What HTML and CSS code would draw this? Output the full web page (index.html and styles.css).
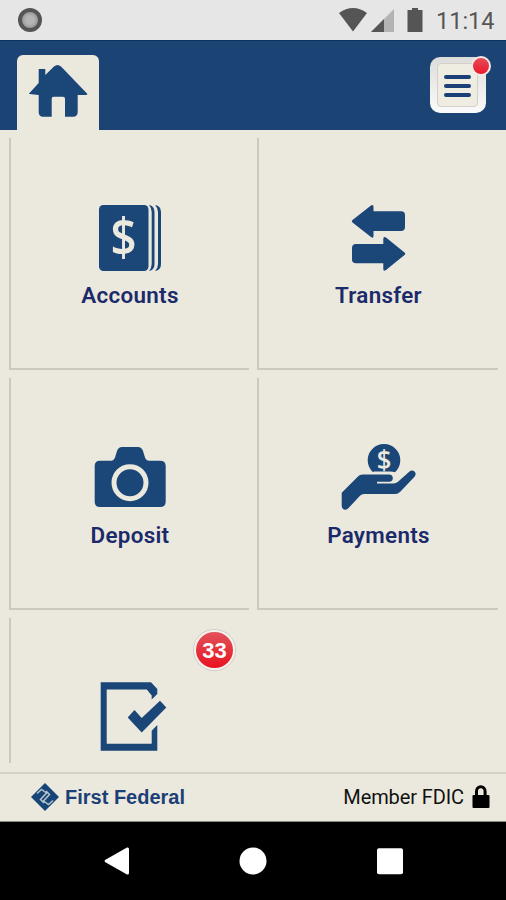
FILE: index.html
```
<!DOCTYPE html>
<html lang="en">
<head>
  <meta charset="UTF-8" />
  <meta name="viewport" content="width=device-width, initial-scale=1.0"/>
  <title>First Federal</title>
  <link rel="stylesheet" href="styles.css">
</head>
<body>
  <div class="status-bar">
    <span class="record"></span>
    <svg class="status-icons" viewBox="0 0 86 26">
      <path d="M0 6 Q14 -4 28 6 L14 24.500 Z" fill="#555" />
      <path d="M55 2 V25 H32 Z" fill="#b3b3b3" />
      <path d="M45 12 V25 H32 Z" fill="#555" />
      <path d="M73 1 h6 v2 h4.500 v22 h-15 v-22 h4.500 Z" fill="#555" />
    </svg>
    <span class="time">11:14</span>
  </div>

  <header class="header">
    <a class="home-tab" href="#">
      <svg class="home-icon" viewBox="0 0 60 54">
        <path d="M1.500 30 Q0.500 30 1.500 29 L10.700 19 V5 H17.300 V11 L26 2.500 Q29.500 -0.500 33 2.500 L59 29.500 Q60 31 58 31 H49.700 V48 Q49.700 52.700 45 52.700 H37 V34.500 Q37 32.700 35 32.700 H25.500 Q23.700 32.700 23.700 34.500 V52.700 H15 Q10.700 52.700 10.700 48 V31 Z" />
      </svg>
    </a>
    <button class="menu">
      <span class="menu-inner"><i></i><i></i><i></i></span>
      <span class="dot"></span>
    </button>
  </header>

  <main class="tiles">
    <a class="tile" href="#">
      <svg class="tile-icon" viewBox="0 0 80 80">
        <rect x="9" y="7" width="49.500" height="66" rx="4.500" />
        <path d="M59 7 Q64.500 8 64.500 14 V66 Q64.500 72 59 73 Q61.700 70 61.700 66 V14 Q61.700 10 59 7 Z" />
        <path d="M65 7 Q71 8 71 14 V66 Q71 72 65 73 Q68 70 68 66 V14 Q68 10 65 7 Z" />
        <text class="dollar" transform="translate(33.500 58) scale(0.88 1)">$</text>
      </svg>
      <span class="label">Accounts</span>
    </a>
    <a class="tile" href="#">
      <svg class="tile-icon" viewBox="1 0 80 80">
        <path d="M14.500 22 L33 7.500 Q35.500 6 35.500 9 V13.300 H63 Q67 13.300 67 17 V29 Q67 33 63 33 H35.500 V38 Q35.500 41 33 39 L14.500 24.500 Q13 23.200 14.500 22 Z" />
        <path d="M66.500 54.500 L48 39.500 Q45.300 38 45.300 41 V46 H18 Q14 46 14 50 V61.500 Q14 65.300 18 65.300 H45.300 V71 Q45.300 74 48 72 L66.500 57 Q68 55.700 66.500 54.500 Z" />
      </svg>
      <span class="label">Transfer</span>
    </a>
    <a class="tile" href="#">
      <svg class="tile-icon" viewBox="0 0 80 80">
        <path d="M10 22.700 H21 Q24 22.500 25 19.500 L27 13 Q28.500 9 32 9 H48 Q51.500 9 53 13 L55 19.500 Q56 22.500 59 22.700 H70 Q75.700 22.700 75.700 28 V63.500 Q75.700 69 70 69 H10 Q4.700 69 4.700 63.500 V28 Q4.700 22.700 10 22.700 Z" />
        <circle class="lens" cx="40" cy="44.700" r="16" />
      </svg>
      <span class="label">Deposit</span>
    </a>
    <a class="tile" href="#">
      <svg class="tile-icon" viewBox="1 0 80 80">
        <path d="M35 34.300 A16.300 16.300 0 1 1 57 34.300 Q55 33.600 52 33.600 H36 Z" />
        <text class="dollar small" transform="translate(46 32) scale(0.95 1)">$</text>
        <path d="M3.700 54.700 L19.500 39 Q21.500 36.600 25 36.600 H51 Q54.800 36.600 54.800 40.300 Q54.800 43.700 51 43.700 H39 V45.600 H55.500 Q58 45.600 60 43.800 L71.500 33.500 Q74 31.500 76.500 33.600 Q78.800 36 76.500 38.800 L62.500 53.500 Q60 56 57 56 H26 Q23.500 56 22 57.800 L10.500 70 Q8.500 72.500 6 71.500 Q3.700 71 3.700 68 Z" />
      </svg>
      <span class="label">Payments</span>
    </a>
    <a class="tile last" href="#">
      <svg class="tile-icon" viewBox="0 0 80 80">
        <path d="M10.700 5.300 H61 L67.300 12 V17 L61.700 22.500 V18.500 L56.800 12.500 H16.700 V66.700 H61.700 V53.700 L67.300 48 V73.700 H10.700 Z" />
        <path d="M37.700 40.500 L44.500 33 L51.700 40.900 L70 23.800 L76.300 30.600 L51.700 55.500 Z" />
      </svg>
      <span class="badge">33</span>
    </a>
  </main>

  <footer class="footer">
    <svg class="logo" viewBox="0 0 30 30">
      <path d="M15 1 L29 15 L15 29 L1 15 Z" fill="#164577" />
      <path d="M7 11.500 L11.500 7.500 L16.500 11 L10.500 17.500 L14 21 M23 18.500 L18.500 22.500 L13.500 19 L19.500 12.500 L16 9" fill="none" stroke="#b9c3ca" stroke-width="1.500" />
    </svg>
    <span class="brand">First Federal</span>
    <span class="fdic">Member FDIC</span>
    <svg class="lock" viewBox="0 0 18 24">
      <path d="M4.500 11 V6.500 A4.300 4.800 0 0 1 13.100 6.500 V11" fill="none" stroke="#000" stroke-width="3" />
      <rect x="0.500" y="10" width="17" height="13" rx="1" />
    </svg>
  </footer>

  <nav class="nav-bar">
    <svg viewBox="-1 0 28 28"><path d="M2 13 L24 0.500 Q26 0 26 2 V26 Q26 28 24 27.500 L2 15 Q1 14 2 13 Z" /></svg>
    <svg viewBox="0 0 28 28"><circle cx="14" cy="14" r="13.500" /></svg>
    <svg viewBox="0 0 28 28"><rect x="1" y="1.300" width="26" height="26" rx="2" /></svg>
  </nav>
</body>
</html>
```
FILE: styles.css
```
* {
  box-sizing: border-box;
}

body {
  margin: 0;
  width: 506px;
  height: 900px;
  display: flex;
  flex-direction: column;
  overflow: hidden;
  background-color: #ebe8dd;
  font-family: Roboto, "Liberation Sans", sans-serif;
}

a {
  text-decoration: none;
}

svg {
  display: block;
  flex: none;
}

.status-bar {
  height: 40px;
  flex: none;
  display: flex;
  align-items: center;
  padding: 0 12px 0 18px;
  background-color: #e6e6e6;
}

.record {
  width: 24px;
  height: 24px;
  border: 4px solid #555;
  border-radius: 50%;
  background: radial-gradient(#b5b5b5 35%, #999 70%);
}

.status-icons {
  width: 86px;
  height: 26px;
  margin-left: auto;
}

.time {
  width: 58px;
  margin-left: 11px;
  padding-top: 2px;
  font-size: 23.5px;
  line-height: 28px;
  color: #555;
}

.header {
  height: 90px;
  flex: none;
  display: flex;
  justify-content: space-between;
  align-items: flex-start;
  padding: 14px 20px 0 17px;
  background-color: #1b4475;
  border-top: 1px solid #0b3260;
}

.home-tab {
  width: 82px;
  height: 76px;
  padding: 9px 0 0 11px;
  border-radius: 6px 6px 0 0;
  background-color: #ebe8dd;
}

.home-icon {
  width: 60px;
  height: 54px;
  fill: #1a4678;
}

.menu {
  position: relative;
  width: 56px;
  height: 56px;
  margin-top: 2px;
  padding: 6px 8px 6px 7px;
  border: none;
  border-radius: 10px;
  background: linear-gradient(#dcdcda, #fbfbfb);
}

.menu-inner {
  height: 44px;
  display: flex;
  flex-direction: column;
  justify-content: center;
  align-items: center;
  gap: 5px;
  padding-top: 2px;
  border: 1px solid #d2d0c8;
  border-radius: 4px;
  background-color: #efede2;
}

.menu-inner i {
  width: 27px;
  height: 4px;
  border-radius: 2px;
  background-color: #1b4077;
}

.dot {
  position: absolute;
  top: -1px;
  right: -5px;
  width: 20px;
  height: 20px;
  border: 2px solid #f3e9e9;
  border-radius: 50%;
  background: linear-gradient(#e74a55, #e8192c);
}

.tiles {
  height: 642px;
  flex: none;
  display: grid;
  grid-template-columns: 240px 241px;
  grid-template-rows: 232px 232px 145px;
  gap: 8px;
  padding: 8px 8px 0 9px;
}

.tile {
  position: relative;
  display: flex;
  flex-direction: column;
  align-items: center;
  padding-top: 60px;
  border-left: 2px solid #cbc9bd;
  border-bottom: 2px solid #cbc9bd;
}

.tile.last {
  padding-top: 59px;
  border-bottom: none;
}

.tile-icon {
  width: 80px;
  height: 80px;
  fill: #1a4678;
}

.dollar {
  fill: #ebe8dd;
  font-family: "Open Sans", sans-serif;
  font-size: 52px;
  font-weight: 600;
  text-anchor: middle;
}

.dollar.small {
  font-size: 27px;
}

.lens {
  fill: none;
  stroke: #ebe8dd;
  stroke-width: 5;
}

.label {
  margin-top: 4px;
  font-size: 22.4px;
  font-weight: 600;
  line-height: 26px;
  letter-spacing: 0.3px;
  color: #1b2a6b;
}

.badge {
  position: absolute;
  top: 12px;
  right: 14px;
  width: 41px;
  height: 40px;
  border: 2px solid #f5f2ee;
  border-radius: 50%;
  background: linear-gradient(#e2525b, #e8131f);
  box-shadow: 0 0 0 1px #d0cdc5;
  color: #fff;
  font: bold 22px/37px "Liberation Sans", sans-serif;
  text-align: center;
}

.footer {
  height: 50px;
  flex: none;
  display: flex;
  align-items: center;
  padding: 0 16px 1px 30px;
  border-top: 2px solid #d3d1ca;
  border-bottom: 1px solid #8d8c84;
}

.logo {
  width: 30px;
  height: 30px;
}

.brand {
  margin-left: 5px;
  font: bold 20px/24px "Liberation Sans", sans-serif;
  color: #1b4077;
}

.fdic {
  margin-left: auto;
  font-size: 20px;
  line-height: 24px;
  letter-spacing: -0.1px;
  color: #111;
}

.lock {
  width: 18px;
  height: 24px;
  margin-left: 8px;
}

.nav-bar {
  flex: 1;
  display: flex;
  justify-content: center;
  align-items: center;
  gap: 109px;
  background-color: #000;
}

.nav-bar svg {
  width: 28px;
  height: 28px;
  fill: #fff;
}
```
